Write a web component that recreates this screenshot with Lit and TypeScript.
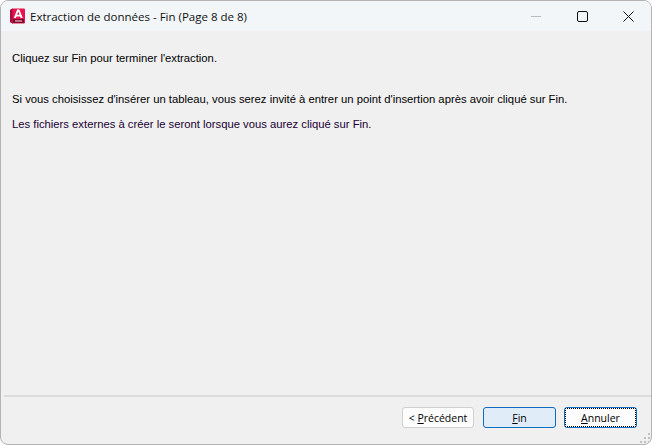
import { LitElement, html, css } from "lit";
import { customElement } from "lit/decorators.js";

@customElement("app-root")
export class AppRoot extends LitElement {
  static styles = css`
    :host { display: block; width: 652px; height: 445px; background: #fff; font-family: "Liberation Sans", Arial, sans-serif; font-size: 11.27px; color: #000; }
    .win { box-sizing: border-box; width: 652px; height: 445px; border: 1px solid #b4b4b4; border-radius: 8px; background: #f0f0f0; display: flex; flex-direction: column; overflow: hidden; }
    .title { height: 30px; flex: none; background: #f3f6f9; display: flex; align-items: center; padding-left: 9px; }
    .logo { width: 15px; height: 16px; flex: none; margin-right: 5px; }
    .title span { font-family: "Open Sans", sans-serif; font-size: 11.5px; flex: 1; white-space: nowrap; color: #111; }
    .ctl { width: 46px; height: 30px; display: flex; align-items: center; justify-content: center; flex: none; }
    .body { flex: 1; padding: 19px 0 0 11px; }
    .body p { margin: 0; white-space: nowrap; height: 16px; line-height: 16px; }
    .l1 { margin-bottom: 25px !important; }
    .l2 { margin-bottom: 9px !important; }
    .l3 { color: #1a0033; }
    .rule { height: 2px; margin: 0 0 0 3px; background: #dcdcdc; flex: none; }
    .foot { height: 47px; flex: none; display: flex; justify-content: flex-end; align-items: flex-start; padding: 10px 14px 0 0; box-sizing: border-box; position: relative; }
    button { box-sizing: border-box; height: 21px; border-radius: 3px; font-family: "Open Sans", sans-serif; font-size: 10.5px; color: #000; padding: 0; background: #fdfdfd; border: 1px solid #d0d0d0; }
    button u { text-underline-offset: 1px; }
    .prev { width: 72px; margin-right: 9px; }
    .fin { width: 73px; margin-right: 8px; background: #e0ecf8; border: 1px solid #0f6cbd; }
    .ann { width: 73px; border: 1px solid #0f6cbd; position: relative; }
    .ann::after { content: ""; position: absolute; inset: 0; border: 1px dotted #000; }
    .grip { position: absolute; right: 0; bottom: 0; width: 11px; height: 11px; }
  `;
  render() {
    return html`<div class="win">
      <div class="title">
        <svg class="logo" viewBox="0 0 15 16">
          <path d="M2 .5h12a1 1 0 0 1 1 1v13a1 1 0 0 1-1 1H2z" fill="#e8134f"/>
          <path d="M0 1.8 2.6.5v15L0 14.2z" fill="#a80c3c"/>
          <path d="M3.8 10 7.2 1.6h2.2L12.8 10h-2.1l-.6-1.6H6.5L5.9 10zM7.1 6.8h2.4L8.3 3.5z" fill="#fff"/>
          <rect x="3" y="11" width="11" height="4" fill="#7a0a2e"/>
          <rect x="5" y="12.2" width="7" height="1.6" fill="#d88aa2"/>
        </svg>
        <span>Extraction de données - Fin (Page 8 de 8)</span>
        <div class="ctl"><svg width="10" height="10"><path d="M0 5.5h10" stroke="#bcbcbc"/></svg></div>
        <div class="ctl"><svg width="11" height="11"><rect x=".5" y=".5" width="10" height="10" rx="1.5" fill="none" stroke="#111"/></svg></div>
        <div class="ctl"><svg width="11" height="11"><path d="M.5.5l10 10M10.5.5l-10 10" stroke="#111" fill="none"/></svg></div>
      </div>
      <div class="body">
        <p class="l1">Cliquez sur Fin pour terminer l'extraction.</p>
        <p class="l2">Si vous choisissez d'insérer un tableau, vous serez invité à entrer un point d'insertion après avoir cliqué sur Fin.</p>
        <p class="l3">Les fichiers externes à créer le seront lorsque vous aurez cliqué sur Fin.</p>
      </div>
      <div class="rule"></div>
      <div class="foot">
        <button class="prev">&lt; <u>P</u>récédent</button>
        <button class="fin"><u>F</u>in</button>
        <button class="ann"><u>A</u>nnuler</button>
        <svg class="grip" viewBox="0 0 11 11" fill="#c0c0c0">
          <rect x="8" y="0" width="2" height="2"/><rect x="4" y="4" width="2" height="2"/><rect x="8" y="4" width="2" height="2"/>
          <rect x="0" y="8" width="2" height="2"/><rect x="4" y="8" width="2" height="2"/><rect x="8" y="8" width="2" height="2"/>
        </svg>
      </div>
    </div>`;
  }
}
